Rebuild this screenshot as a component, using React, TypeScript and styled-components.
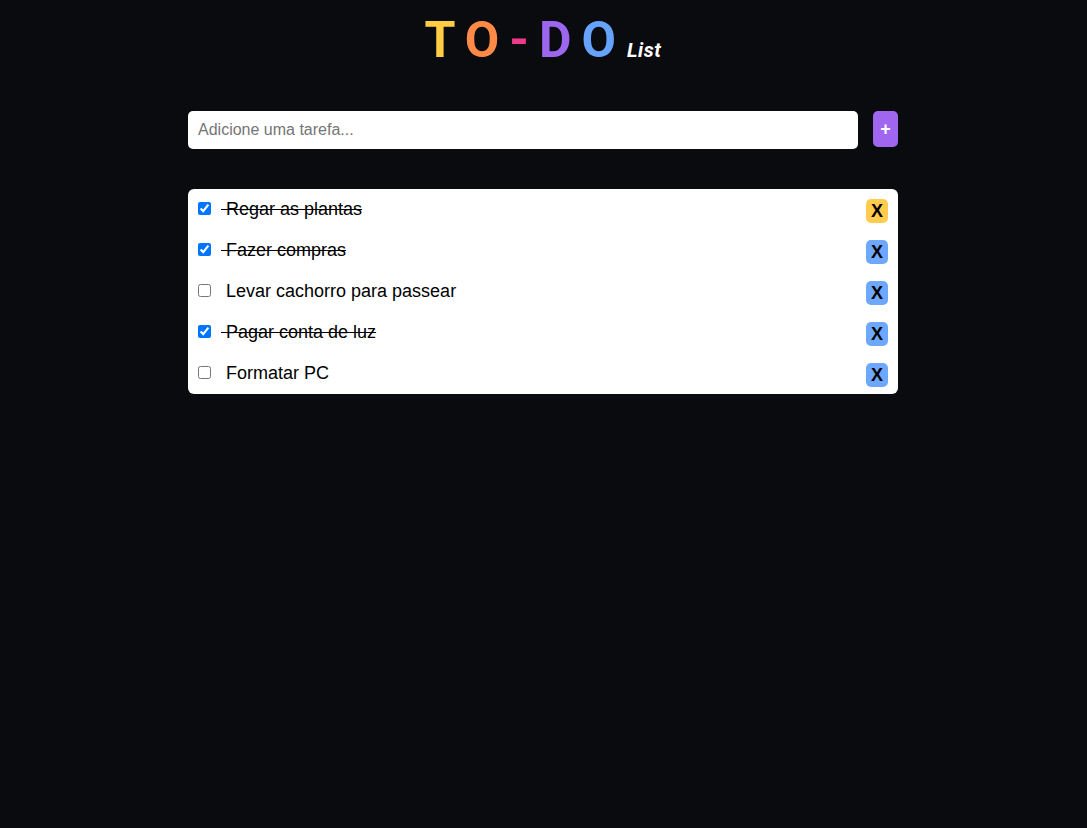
import React, { useState } from "react";
import styled, { createGlobalStyle } from "styled-components";

const GlobalStyle = createGlobalStyle`
  html, body { margin: 0; padding: 0; background: #0a0b0e; }
  body { font-family: "Liberation Sans", Arial, sans-serif; min-height: 828px; }
`;

const Page = styled.div`
  width: 710px;
  margin-left: calc((100% - 711px) / 2);
  padding-top: 15px;
`;

const Title = styled.h1`
  margin: 0;
  text-align: center;
  font-family: Roboto, "Liberation Sans", sans-serif;
  font-weight: 700;
  font-size: 50px;
  line-height: 50px;
  white-space: nowrap;
`;

const Letter = styled.span<{ $color: string }>`
  color: ${(p) => p.$color};
  letter-spacing: 10px;
`;

const Sub = styled.span`
  color: #ffffff;
  font-style: italic;
  font-size: 20px;
  line-height: 1;
  letter-spacing: 0.6px;
  margin-left: 1px;
`;

const Form = styled.form`
  display: flex;
  align-items: flex-start;
  gap: 15px;
  margin-top: 46px;
`;

const Input = styled.input`
  flex: 1;
  height: 38px;
  box-sizing: border-box;
  border: none;
  border-radius: 5px;
  padding: 0 10px;
  font-family: "Liberation Sans", Arial, sans-serif;
  font-size: 16px;
  color: #000;
  outline: none;
  &::placeholder { color: #757575; }
`;

const AddButton = styled.button`
  width: 25px;
  height: 36px;
  border: none;
  border-radius: 5px;
  background: #a066f0;
  color: #fff;
  font-family: "Liberation Sans", Arial, sans-serif;
  font-weight: 700;
  font-size: 18px;
  padding: 0;
  cursor: pointer;
`;

const List = styled.ul`
  list-style: none;
  margin: 40px 0 0;
  padding: 10px 10px 7px;
  background: #fff;
  border-radius: 6px;
  display: flex;
  flex-direction: column;
  gap: 17px;
`;

const Row = styled.li`
  display: flex;
  align-items: flex-start;
  height: 24px;
`;

const Check = styled.input`
  width: 13px;
  height: 13px;
  margin: 3px 3px 0 0;
  accent-color: #0075ff;
`;

const Label = styled.span<{ $done: boolean }>`
  flex: 1;
  margin-left: 7px;
  font-size: 18px;
  line-height: 21px;
  color: #000;
  white-space: pre;
  text-decoration: ${(p) => (p.$done ? "line-through" : "none")};
`;

const Remove = styled.button<{ $hover?: boolean }>`
  width: 22px;
  height: 24px;
  padding: 0;
  border: none;
  border-radius: 5px;
  background: ${(p) => (p.$hover ? "#ffcc4d" : "#6ea8fe")};
  color: #000;
  font-family: "Liberation Sans", Arial, sans-serif;
  font-weight: 700;
  font-size: 18px;
  line-height: 24px;
  cursor: pointer;
`;

const initial = [
  { text: "Regar as plantas", done: true },
  { text: "Fazer compras", done: true },
  { text: "Levar cachorro para passear", done: false },
  { text: "Pagar conta de luz", done: true },
  { text: "Formatar PC", done: false },
];

export default function App() {
  const [items, setItems] = useState(initial);
  const letters: [string, string][] = [
    ["T", "#ffcc44"],
    ["O", "#ff8a47"],
    ["-", "#ee3a8c"],
    ["D", "#9d66ef"],
    ["O", "#66a3ff"],
  ];
  return (
    <>
      <GlobalStyle />
      <Page>
        <Title>
          {letters.map(([l, c], i) => (
            <Letter key={i} $color={c}>{l}</Letter>
          ))}
          <Sub>List</Sub>
        </Title>
        <Form onSubmit={(e) => e.preventDefault()}>
          <Input placeholder="Adicione uma tarefa..." />
          <AddButton type="submit">+</AddButton>
        </Form>
        <List>
          {items.map((it, i) => (
            <Row key={i}>
              <Check
                type="checkbox"
                checked={it.done}
                onChange={() =>
                  setItems(items.map((x, j) => (j === i ? { ...x, done: !x.done } : x)))
                }
              />
              <Label $done={it.done}>{" " + it.text}</Label>
              <Remove $hover={i === 0}>X</Remove>
            </Row>
          ))}
        </List>
      </Page>
    </>
  );
}
